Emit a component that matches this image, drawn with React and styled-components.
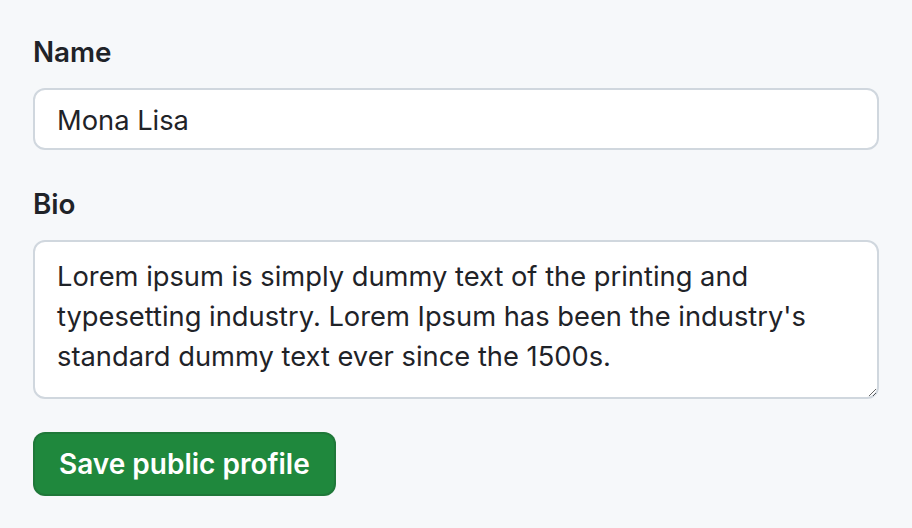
import React, { useState } from 'react';
import styled, { createGlobalStyle } from 'styled-components';

const GlobalStyle = createGlobalStyle`
  html, body {
    margin: 0;
    background: #f6f8fa;
  }
  body {
    font-family: Inter, "Noto Sans", sans-serif;
    color: #1f2328;
  }
`;

const Container = styled.form`
  padding: 32px 33px;
  width: 846px;
`;

const FormGroup = styled.div`
  margin-bottom: ${props => props.last ? '33px' : '34px'};
`;

const Label = styled.label`
  display: block;
  font-size: 27.8px;
  line-height: 40px;
  font-weight: 600;
  margin-bottom: 16px;
`;

const Input = styled.input`
  box-sizing: border-box;
  display: block;
  width: 100%;
  height: 62px;
  padding: 2px 22px 0;
  border: 2px solid #d0d7de;
  border-radius: 12px;
  background: #ffffff;
  font-family: inherit;
  font-size: 27.3px;
  color: #1f2328;
  outline: none;
`;

const TextArea = styled.textarea`
  box-sizing: border-box;
  display: block;
  width: 100%;
  height: 159px;
  padding: 15px 22px 13px;
  border: 2px solid #d0d7de;
  border-radius: 12px;
  background: #ffffff;
  font-family: inherit;
  font-size: 27.3px;
  line-height: 40px;
  color: #1f2328;
  resize: vertical;
  outline: none;
`;

const Button = styled.button`
  height: 64px;
  padding: 0 24px;
  border: 2px solid rgba(31, 35, 40, 0.15);
  border-radius: 12px;
  background: #1f883d;
  color: #ffffff;
  font-family: inherit;
  font-size: 28px;
  font-weight: 600;
  cursor: pointer;
`;

export default function App() {
  const [name, setName] = useState('Mona Lisa');
  const [bio, setBio] = useState(
    "Lorem ipsum is simply dummy text of the printing and typesetting industry. Lorem Ipsum has been the industry's standard dummy text ever since the 1500s."
  );

  return (
    <>
      <GlobalStyle />
      <Container onSubmit={e => e.preventDefault()}>
        <FormGroup>
          <Label htmlFor="name">Name</Label>
          <Input id="name" value={name} onChange={e => setName(e.target.value)} />
        </FormGroup>
        <FormGroup last>
          <Label htmlFor="bio">Bio</Label>
          <TextArea id="bio" value={bio} onChange={e => setBio(e.target.value)} />
        </FormGroup>
        <Button type="submit">Save public profile</Button>
      </Container>
    </>
  );
}
